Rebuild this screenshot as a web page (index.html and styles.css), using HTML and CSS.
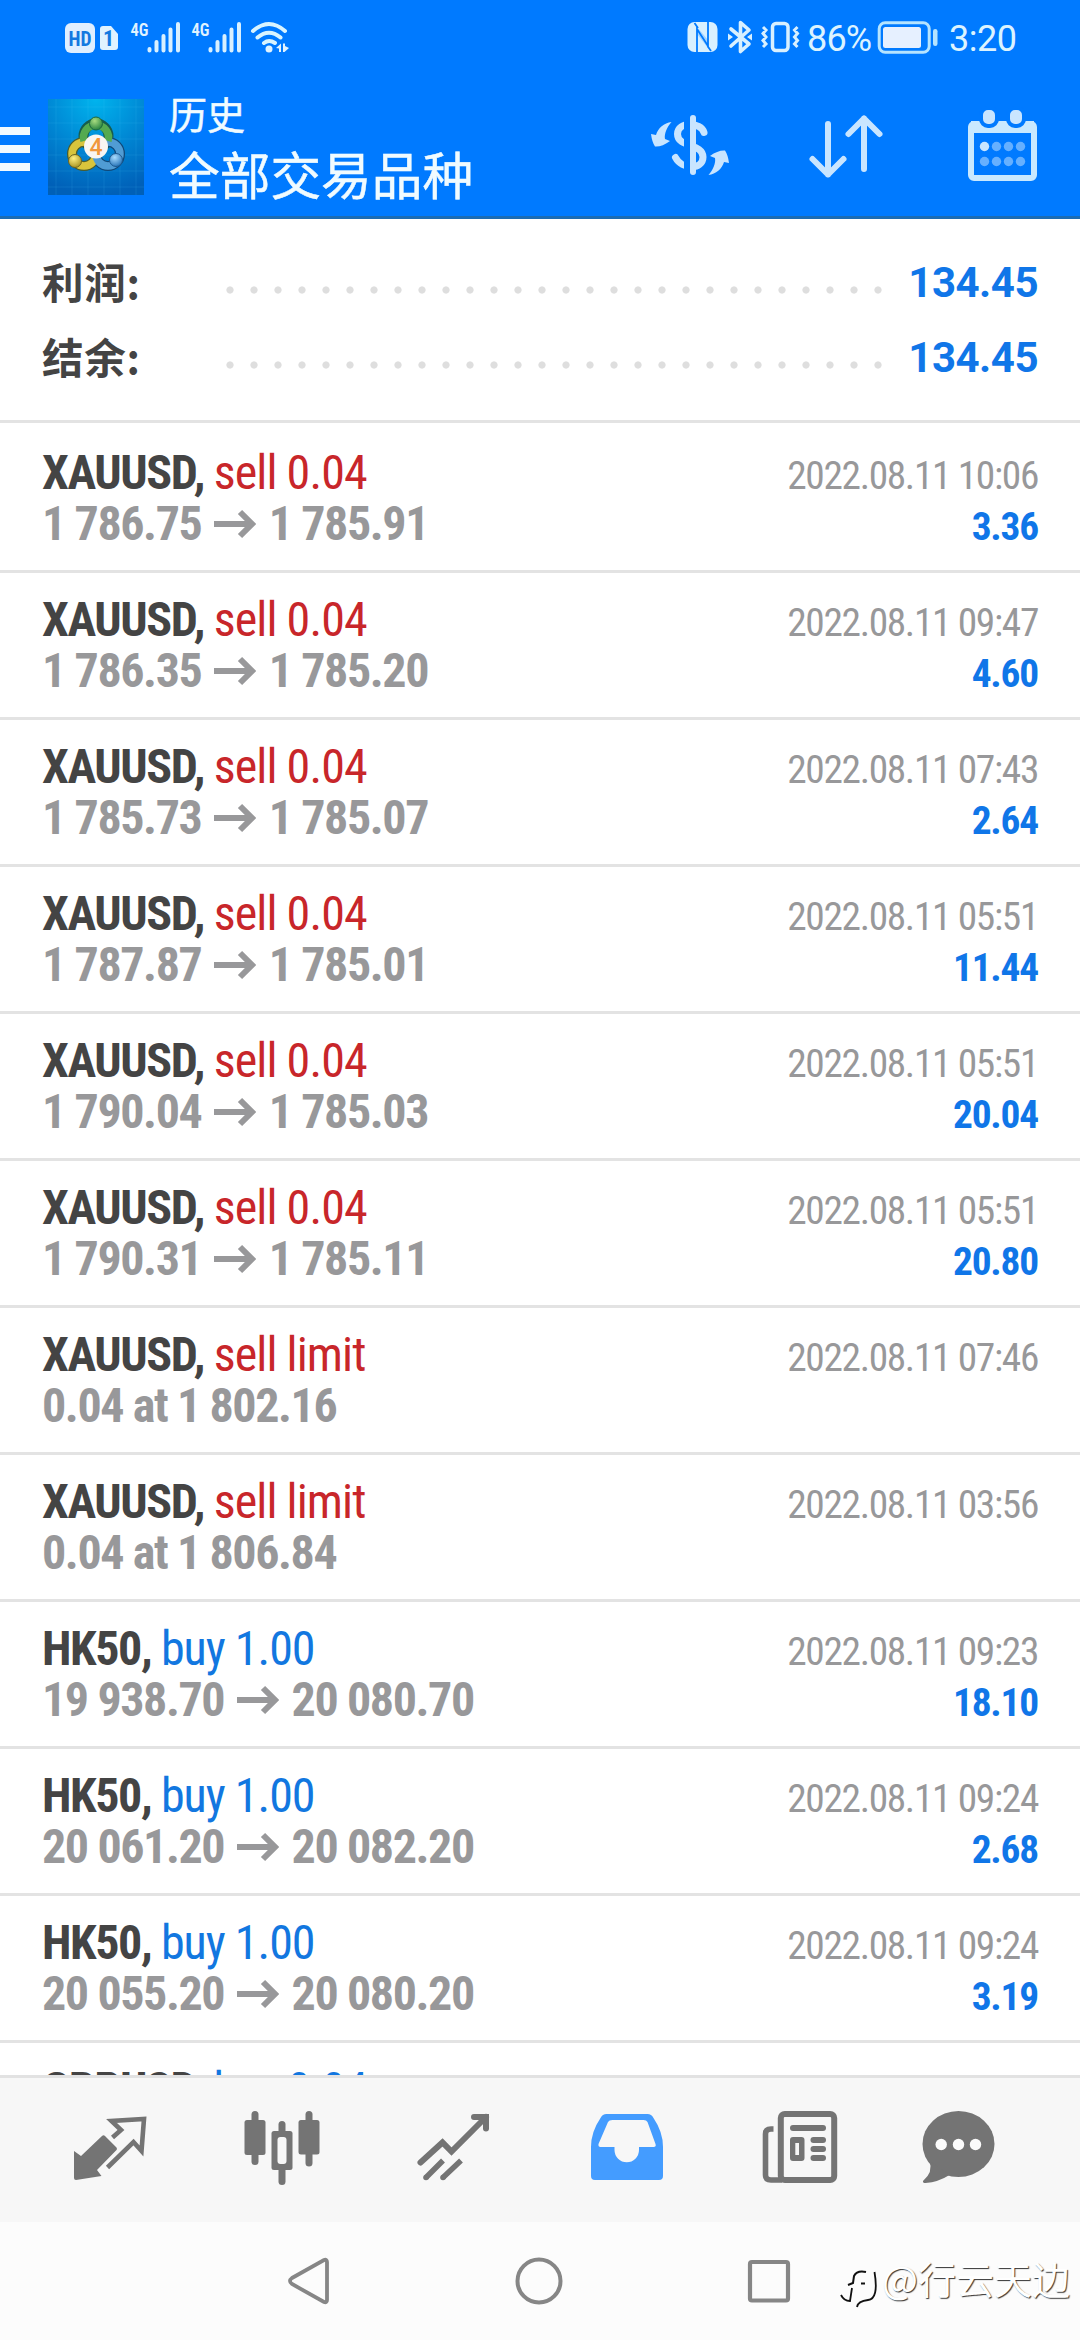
FILE: index.html
```html
<!DOCTYPE html>
<html lang="zh-CN">
<head>
<meta charset="utf-8">
<title>历史</title>
<link rel="stylesheet" href="styles.css">
</head>
<body>
<svg width="0" height="0" class="defs">
  <symbol id="arrow" viewBox="0 0 42 30"><path d="M0 15H38M26 3L38 15L26 27" fill="none" stroke="currentColor" stroke-width="6"/></symbol>
</svg>
<div class="screen">
  <header class="top">
    <div class="status">
      <svg width="230" height="75" viewBox="62 0 230 75">
        <rect x="65" y="23" width="30" height="30" rx="6" fill="#e0efff"/>
        <text x="80" y="46" class="hd" text-anchor="middle" textLength="23" lengthAdjust="spacingAndGlyphs">HD</text>
        <path d="M103 26H111L118 34V47Q118 50 115 50H103Q100 50 100 47V29Q100 26 103 26Z" fill="#e0f3ff"/>
        <text x="108.500" y="45.500" class="sim" text-anchor="middle">1</text>
        <text x="130.500" y="36" class="net" textLength="18" lengthAdjust="spacingAndGlyphs">4G</text>
        <path d="M149.500 49V50.500M156.500 42V50.500M163.500 36V50.500M170.500 29.500V50.500M178 24V50.500" class="bars"/>
        <text x="191.500" y="36" class="net" textLength="18" lengthAdjust="spacingAndGlyphs">4G</text>
        <path d="M210.500 49V50.500M217.500 42V50.500M224.500 36V50.500M231.500 29.500V50.500M239 24V50.500" class="bars"/>
        <path d="M253 31Q269 17 285 31M257.500 37.500Q269 28 280.500 37.500M264 43Q269 39 275 43" class="wifi"/>
        <circle cx="269" cy="49" r="3.500" fill="#e0f3ff"/>
        <path d="M276 48L281 43.500V52H279V48.500ZM283 43.500H285V46L289 48L284.500 52H283Z" fill="#e0f3ff"/>
      </svg>
      <div class="status-right">
        <svg width="116" height="75" viewBox="685 0 116 75">
          <rect x="687.500" y="22" width="30" height="30" rx="7" fill="#d8f0ff"/>
          <path d="M697 52V29L708 46V22M694.500 23L698 28M711 51L707.500 46" fill="none" stroke="#007aff" stroke-width="1.800"/>
          <path d="M697 27L708 40V48L697 34Z" fill="#007aff" opacity=".25"/>
          <path d="M731 29L749 44L740.500 51.500V22.500L749 30L731 46" fill="none" stroke="#d8f0ff" stroke-width="3.600" stroke-linejoin="round" stroke-linecap="round"/>
          <path d="M728 33.500L733 37L728 40.500ZM752 33.500L747 37L752 40.500Z" fill="#d8f0ff"/>
          <rect x="772.500" y="23.500" width="15.500" height="27" rx="3.500" fill="none" stroke="#d8f0ff" stroke-width="3.500"/>
          <path d="M763 27L766 30L763 33.500L766 37L763 40.500L766 44L763 47M797.500 27L794.500 30L797.500 33.500L794.500 37L797.500 40.500L794.500 44L797.500 47" fill="none" stroke="#d8f0ff" stroke-width="3"/>
        </svg>
        <span class="pct">86%</span>
        <svg width="62" height="75" viewBox="877 0 62 75">
          <rect x="879.200" y="22.700" width="50" height="29.600" rx="6" fill="none" stroke="#b5e4ff" stroke-width="3"/>
          <rect x="883" y="27" width="38" height="21" rx="2.500" fill="#e6f0ff"/>
          <rect x="933" y="29" width="4.500" height="17" rx="2.200" fill="#b5e4ff"/>
        </svg>
        <span class="clock">3:20</span>
      </div>
    </div>
    <div class="bar">
      <div class="menu"><i></i><i></i><i></i></div>
      <svg class="logo" width="96" height="96" viewBox="0 0 96 96">
        <defs>
          <radialGradient id="bg" cx=".5" cy="0" r="1"><stop offset="0" stop-color="#00b4ee"/><stop offset=".55" stop-color="#0084d2"/><stop offset="1" stop-color="#0060b8"/></radialGradient>
          <radialGradient id="gg" cx=".4" cy=".3" r=".8"><stop offset="0" stop-color="#a8dc80"/><stop offset="1" stop-color="#187838"/></radialGradient>
          <radialGradient id="gy" cx=".4" cy=".3" r=".8"><stop offset="0" stop-color="#fff080"/><stop offset="1" stop-color="#a08a18"/></radialGradient>
          <radialGradient id="gb" cx=".4" cy=".3" r=".8"><stop offset="0" stop-color="#a8dcff"/><stop offset="1" stop-color="#1868b0"/></radialGradient>
        </defs>
        <rect width="96" height="96" fill="url(#bg)"/>
        <path d="M8 0V96M24 0V96M40 0V96M56 0V96M72 0V96M88 0V96M0 8H96M0 24H96M0 40H96M0 56H96M0 72H96M0 88H96" stroke="#58c8f8" stroke-opacity=".13"/>
        <circle cx="48" cy="37" r="12.500" fill="none" stroke="#175c4e" stroke-width="10"/>
        <circle cx="36" cy="55" r="12" fill="none" stroke="#4c5c2c" stroke-width="10"/>
        <circle cx="60" cy="55" r="12" fill="none" stroke="#104878" stroke-width="10"/>
        <circle cx="36" cy="55" r="12" fill="none" stroke="#d8c43c" stroke-width="7.500"/>
        <circle cx="60" cy="55" r="12" fill="none" stroke="#509cd4" stroke-width="7.500"/>
        <path d="M36 42A12.500 12.500 0 1 1 60 42" fill="none" stroke="#54aa50" stroke-width="7.500"/>
        <circle cx="48" cy="24.500" r="6.500" fill="url(#gg)" stroke="#1c6840"/>
        <circle cx="27" cy="62" r="6.500" fill="url(#gy)" stroke="#6c6420"/>
        <circle cx="68" cy="61" r="6.500" fill="url(#gb)" stroke="#1c5890"/>
        <circle cx="48" cy="47.500" r="12" fill="#f8f6f2"/>
        <text x="48" y="55.500" text-anchor="middle" class="four">4</text>
      </svg>
      <div class="titles">
        <div class="section">历史</div>
        <div class="symbols">全部交易品种</div>
      </div>
      <div class="actions">
        <svg width="80" height="90" viewBox="650 100 80 90">
          <path d="M704 132.500C701 122 677.500 121 677.500 134C677.500 148 703 143 703 157C703 170 682 170 675.500 157.500" fill="none" stroke="#c9e5ff" stroke-width="7" stroke-linecap="round"/>
          <rect x="684" y="112" width="12" height="62" fill="#007aff"/>
          <path d="M693 118V172" stroke="#c9e5ff" stroke-width="6" stroke-linecap="round"/>
          <path id="turn" d="M671.500 122C664 123 658 128 656 135L651 134Q652 142 655 146.500Q662 147 670 141L665 139C664 134 667 127 671.500 122Z" fill="#c9e5ff"/>
          <use href="#turn" transform="rotate(180 690 148.500)"/>
        </svg>
        <svg width="80" height="90" viewBox="806 100 80 90"><path d="M828 124V174.500M812.500 159L828 174.500L843.500 159M864 169V118.500M848.500 134L864 118.500L879.500 134" fill="none" stroke="#c9e5ff" stroke-width="6" stroke-linecap="round" stroke-linejoin="round"/></svg>
        <svg width="80" height="90" viewBox="962 100 80 90">
          <rect x="971" y="124" width="63" height="54" rx="3" fill="none" stroke="#c9e9ff" stroke-width="6"/>
          <path d="M971 127H1034" stroke="#c9e9ff" stroke-width="12"/>
          <rect x="974" y="133" width="57" height="42" rx="5" fill="#007aff"/>
          <g fill="#c9e5ff" stroke="#007aff" stroke-width="4"><rect x="981" y="108" width="16" height="18" rx="7"/><rect x="1008" y="108" width="16" height="18" rx="7"/></g>
          <circle cx="984.500" cy="146.500" r="4.700" fill="#c9e5ff"/>
          <g fill="#66b0ff"><circle cx="996.500" cy="146.500" r="4.700"/><circle cx="1008.500" cy="146.500" r="4.700"/><circle cx="1020.500" cy="146.500" r="4.700"/><circle cx="984.500" cy="161.500" r="4.700"/><circle cx="996.500" cy="161.500" r="4.700"/><circle cx="1008.500" cy="161.500" r="4.700"/><circle cx="1020.500" cy="161.500" r="4.700"/></g>
        </svg>
      </div>
    </div>
  </header>

  <main class="content">
    <section class="summary">
      <div class="sum"><span class="label">利润:</span><span class="leader"></span><span class="total">134.45</span></div>
      <div class="sum"><span class="label">结余:</span><span class="leader"></span><span class="total">134.45</span></div>
    </section>
    <section class="deals">
      <div class="deal"><div class="line"><span><b>XAUUSD,</b> <span class="sell">sell 0.04</span></span><time>2022.08.11 10:06</time></div><div class="line"><span class="price">1 786.75 <svg class="to"><use href="#arrow"/></svg> 1 785.91</span><span class="profit">3.36</span></div></div>
      <div class="deal"><div class="line"><span><b>XAUUSD,</b> <span class="sell">sell 0.04</span></span><time>2022.08.11 09:47</time></div><div class="line"><span class="price">1 786.35 <svg class="to"><use href="#arrow"/></svg> 1 785.20</span><span class="profit">4.60</span></div></div>
      <div class="deal"><div class="line"><span><b>XAUUSD,</b> <span class="sell">sell 0.04</span></span><time>2022.08.11 07:43</time></div><div class="line"><span class="price">1 785.73 <svg class="to"><use href="#arrow"/></svg> 1 785.07</span><span class="profit">2.64</span></div></div>
      <div class="deal"><div class="line"><span><b>XAUUSD,</b> <span class="sell">sell 0.04</span></span><time>2022.08.11 05:51</time></div><div class="line"><span class="price">1 787.87 <svg class="to"><use href="#arrow"/></svg> 1 785.01</span><span class="profit">11.44</span></div></div>
      <div class="deal"><div class="line"><span><b>XAUUSD,</b> <span class="sell">sell 0.04</span></span><time>2022.08.11 05:51</time></div><div class="line"><span class="price">1 790.04 <svg class="to"><use href="#arrow"/></svg> 1 785.03</span><span class="profit">20.04</span></div></div>
      <div class="deal"><div class="line"><span><b>XAUUSD,</b> <span class="sell">sell 0.04</span></span><time>2022.08.11 05:51</time></div><div class="line"><span class="price">1 790.31 <svg class="to"><use href="#arrow"/></svg> 1 785.11</span><span class="profit">20.80</span></div></div>
      <div class="deal"><div class="line"><span><b>XAUUSD,</b> <span class="sell">sell limit</span></span><time>2022.08.11 07:46</time></div><div class="line"><span class="price">0.04 at 1 802.16</span></div></div>
      <div class="deal"><div class="line"><span><b>XAUUSD,</b> <span class="sell">sell limit</span></span><time>2022.08.11 03:56</time></div><div class="line"><span class="price">0.04 at 1 806.84</span></div></div>
      <div class="deal"><div class="line"><span><b>HK50,</b> <span class="buy">buy 1.00</span></span><time>2022.08.11 09:23</time></div><div class="line"><span class="price">19 938.70 <svg class="to"><use href="#arrow"/></svg> 20 080.70</span><span class="profit">18.10</span></div></div>
      <div class="deal"><div class="line"><span><b>HK50,</b> <span class="buy">buy 1.00</span></span><time>2022.08.11 09:24</time></div><div class="line"><span class="price">20 061.20 <svg class="to"><use href="#arrow"/></svg> 20 082.20</span><span class="profit">2.68</span></div></div>
      <div class="deal"><div class="line"><span><b>HK50,</b> <span class="buy">buy 1.00</span></span><time>2022.08.11 09:24</time></div><div class="line"><span class="price">20 055.20 <svg class="to"><use href="#arrow"/></svg> 20 080.20</span><span class="profit">3.19</span></div></div>
      <div class="deal"><div class="line"><span><b>GBPUSD,</b> <span class="buy">buy 0.04</span></span></div></div>
    </section>
  </main>

  <nav class="tabs">
    <svg viewBox="23 2078 172.500 144"><path d="M74 2151L81 2156L102 2136Q103.500 2134.500 105 2136L116.500 2147.500Q117.500 2149 116.500 2150L97 2170L101.500 2176L76 2180Q74 2180 74 2178Z" fill="#747474"/><path d="M112.500 2137.500L121 2130L111.500 2121L144 2119L141.500 2151L133.500 2142L107.500 2167.500" fill="none" stroke="#747474" stroke-width="4.600"/></svg>
    <svg viewBox="195.500 2078 172.500 144"><g fill="#747474"><rect x="244" y="2120" width="21" height="35" rx="2.500"/><rect x="251" y="2111" width="7" height="54" rx="3.500"/><rect x="298" y="2120" width="21" height="34.500" rx="2.500"/><rect x="305" y="2111" width="7" height="55.500" rx="3.500"/><rect x="271" y="2131" width="21" height="39" rx="2.500"/><rect x="278" y="2121" width="7" height="64" rx="3.500"/></g><rect x="277" y="2137" width="9" height="27" rx="3" fill="#f7f7f7"/></svg>
    <svg viewBox="368 2078 172.500 144"><path d="M420.500 2162.500L442.500 2142.500L451.500 2151.500L486 2117M474 2117H486V2128.500" fill="none" stroke="#747474" stroke-width="6" stroke-linecap="round"/><path d="M426 2177.500L443 2160.500M443 2177.500L461 2160.500" stroke="#747474" stroke-width="5.500"/><g fill="#747474"><circle cx="426" cy="2177.500" r="2.800"/><circle cx="443" cy="2177.500" r="2.800"/></g></svg>
    <svg viewBox="540.500 2078 172.500 144"><path fill="#449cff" fill-rule="evenodd" d="M606 2114H647Q651 2114 653 2118Q662.500 2132 662.500 2147V2176Q662.500 2180 658.500 2180H594.500Q590.500 2180 590.500 2176V2147Q590.500 2132 600 2118Q602 2114 606 2114ZM612 2120Q608.500 2120 607.500 2122L598 2144Q597.500 2147 600 2147H614V2150A12.200 12.200 0 0 0 638.500 2150V2147H653Q656 2147 655 2144L647 2122Q646 2120 643 2120Z"/></svg>
    <svg viewBox="713 2078 172.500 144"><rect x="780.800" y="2114" width="53.400" height="66" rx="4" fill="none" stroke="#747474" stroke-width="6"/><path d="M773.500 2129H771Q765.500 2129 765.500 2134V2175Q765.500 2180 771 2180H782" fill="none" stroke="#747474" stroke-width="5.600"/><g fill="#747474"><rect x="790" y="2125" width="36" height="6" rx="3"/><path fill-rule="evenodd" d="M793 2137H801.500Q804.500 2137 804.500 2140V2158Q804.500 2161 801.500 2161H793Q790 2161 790 2158V2140Q790 2137 793 2137ZM795.300 2143V2155H799V2143Z"/><rect x="810.500" y="2137" width="15.500" height="6" rx="3"/><rect x="810.500" y="2146" width="15.500" height="6" rx="3"/><rect x="810.500" y="2155" width="15.500" height="6" rx="3"/></g></svg>
    <svg viewBox="885.500 2078 172.500 144"><ellipse cx="958" cy="2144" rx="36" ry="33" fill="#747474"/><path d="M929 2161Q933 2172 922.500 2181Q922 2183 925 2183Q938 2182 949 2175Z" fill="#747474"/><g fill="#fbfbfb"><circle cx="940.700" cy="2144.500" r="5.700"/><circle cx="958" cy="2144.500" r="5.700"/><circle cx="975" cy="2144.500" r="5.700"/></g></svg>
  </nav>

  <div class="sysnav">
    <svg viewBox="279 2222 60 118"><path d="M292 2278L324 2260Q327 2259 327 2262V2300Q327 2303 324 2302L292 2284Q288 2281 292 2278Z" fill="none" stroke="#868686" stroke-width="3.800"/></svg>
    <svg viewBox="510 2222 60 118"><circle cx="540" cy="2281" r="21.500" fill="none" stroke="#868686" stroke-width="4"/></svg>
    <svg viewBox="739 2222 60 118"><rect x="750" y="2262" width="38" height="38.500" rx="2" fill="none" stroke="#868686" stroke-width="4.200"/></svg>
    <div class="mark">
      <svg width="44" height="48" viewBox="838 2256 44 48" fill="none"><path d="M866 2268Q857 2266 854 2272L853 2279L848 2281M861 2279.500H865" stroke="#111" stroke-width="2"/><path d="M852 2284L850 2297Q844 2297 841 2291M874.500 2268Q879 2295 868 2296Q858 2297 857 2303" stroke="#111" stroke-width="1.800"/></svg>
      <span>@行云天边</span>
    </div>
  </div>
</div>
</body>
</html>
```
FILE: styles.css
```css
* { box-sizing: border-box; }
body { margin: 0; background: #fff; font-family: Roboto, "Noto Sans CJK SC", sans-serif; }
svg { display: block; flex: none; }
.defs { position: absolute; }
.screen { display: flex; flex-direction: column; width: 1080px; height: 2340px; overflow: hidden; }

.top { height: 219px; flex: none; background: #007aff; border-bottom: 3px solid #1b6cb4; }
.status { height: 75px; display: flex; justify-content: space-between; padding: 0 66px 0 62px; }
.status-right { display: flex; align-items: center; color: #dcf3ff; font-size: 36px; line-height: 75px; }
.pct { width: 70px; margin: 3px 0 0 6px; letter-spacing: -.8px; }
.clock { margin: 3px 0 0 10px; width: 65px; letter-spacing: -.5px; white-space: nowrap; }
.hd { font: 700 20px "Roboto Condensed", sans-serif; fill: #1479e0; }
.sim { font: 700 22px "Roboto Condensed", sans-serif; fill: #1479e0; }
.net { font: 600 19px "Roboto Condensed", sans-serif; fill: #e0f3ff; }
.bars { stroke: #d8f0ff; stroke-width: 4; stroke-linecap: round; }
.wifi { fill: none; stroke: #d8f4ff; stroke-width: 4; stroke-linecap: round; }

.bar { height: 141px; display: flex; align-items: flex-start; color: #f0fbff; }
.menu { width: 30px; padding-top: 52px; display: flex; flex-direction: column; gap: 10px; }
.menu i { height: 8px; background: #f2faff; }
.logo { margin: 24px 25px 0 18px; }
.four { font: 500 23px Roboto, sans-serif; fill: #f0983c; }
.titles { padding-top: 11px; -webkit-text-stroke: .5px #f0fbff; }
.titles div { height: 61px; line-height: 61px; white-space: nowrap; }
.section { font-size: 38px; }
.symbols { font-size: 50.7px; }
.actions { margin: 25px 38px 0 auto; display: flex; gap: 76px; }

.content { height: 1859px; flex: none; overflow: hidden; border-bottom: 3px solid #e2e2e2; }
.summary { height: 204px; padding: 26px 42px 0 42px; border-bottom: 3px solid #e3e3e3; font-size: 42px; font-weight: 700; }
.sum { display: flex; height: 75px; line-height: 75px; align-items: baseline; }
.label { width: 176px; padding-top: 2px; margin-bottom: -2px; color: #444; font-family: "Noto Sans CJK SC", sans-serif; font-size: 41.5px; letter-spacing: .8px; align-self: flex-start; line-height: 69px; }
.leader { width: 672px; height: 75px; align-self: flex-start; background: radial-gradient(circle at 12px 45px, #dedede 3.2px, transparent 4px) 0 0 / 24px 75px repeat-x; }
.total { margin-left: auto; color: #1076e8; letter-spacing: -.5px; }

.deals { padding-top: 3px; font-family: "Roboto Condensed", "Noto Sans CJK SC", sans-serif; font-size: 48px; line-height: 51px; }
.deal { height: 147px; padding: 21px 42px 0 42px; border-bottom: 3px solid #e3e3e3; letter-spacing: -1.4px; }
.line { height: 51px; display: flex; justify-content: space-between; align-items: baseline; white-space: nowrap; }
.line b { color: #444; }
.sell { color: #c8262a; letter-spacing: -.9px; }
.buy { color: #1277e0; letter-spacing: -1px; }
.price { color: #98989a; font-weight: 700; }
.to { display: inline-block; width: 42px; height: 30px; vertical-align: 1px; margin: 0 3px; }
time { font-size: 39.4px; line-height: 45px; color: #98989a; letter-spacing: -1.35px; }
.profit { font-size: 39.4px; line-height: 45px; font-weight: 700; color: #1076e8; letter-spacing: -1.2px; }

.tabs { height: 144px; flex: none; display: flex; padding-left: 23px; background: #f7f7f7; }
.tabs svg { width: 172.5px; height: 144px; }
.sysnav { position: relative; height: 118px; flex: none; display: flex; padding-left: 279px; gap: 170px; background: #fcfcfc; }
.sysnav > svg { width: 60px; height: 118px; }
.mark { position: absolute; left: 838px; top: 26px; display: flex; align-items: center; }
.mark svg { margin-top: 12px; }
.mark span { font: 400 38px/54px "Noto Sans CJK SC", sans-serif; color: #fff; text-shadow: 1px 1px 1px #333; white-space: nowrap; }
```
